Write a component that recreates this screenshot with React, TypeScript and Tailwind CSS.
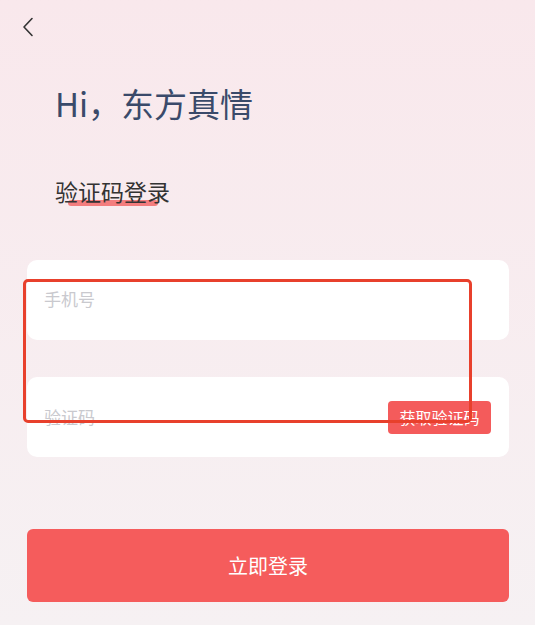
const App = () => {
  return (
    <div className="relative min-h-screen w-full bg-gradient-to-b from-[#f9e8ec] to-[#f6f1f3] font-['Noto_Sans_CJK_SC',sans-serif]">
      <div className="pl-[27px] pr-[26px] pt-[17px]">
        <div className="-ml-[6px] h-5 w-5 flex items-center">
          <svg width="14" height="20" viewBox="0 0 14 20" fill="none">
            <path d="M11 1.5 L3 10 L11 18.5" stroke="#333" strokeWidth="1.6" strokeLinecap="round" strokeLinejoin="round" />
          </svg>
        </div>
        <h1 className="mt-[46px] pl-[28px] text-[33px] leading-[40px] text-[#3a4a6a]">
          Hi，东方真情
        </h1>
        <div className="mt-[55px] pl-[28px]">
          <div className="relative inline-block">
            <span className="absolute left-[13px] top-[22px] h-[6px] w-[90px] rounded-full bg-[#f26a6a]/85"></span>
            <span className="relative text-[23px] leading-[26px] text-[#333]">验证码登录</span>
          </div>
        </div>

        <div className="mt-[54px] flex h-20 items-start rounded-[10px] bg-white px-[17px] pt-[28px]">
          <span className="text-[17px] leading-[22px] text-[#c9c9ce]">手机号</span>
        </div>

        <div className="mt-[37px] flex h-20 items-center justify-between rounded-[10px] bg-white pl-[17px] pr-[18px]">
          <span className="text-[17px] leading-[22px] text-[#c9c9ce]">验证码</span>
          <button className="flex h-[33px] w-[103px] items-center justify-center rounded-[4px] bg-[#f45b5b] text-[16px] text-white">
            获取验证码
          </button>
        </div>

        <button className="mt-[72px] flex h-[73px] w-full items-center justify-center rounded-[6px] bg-[#f55c5c] text-[20px] text-white">
          立即登录
        </button>
      </div>

      <div className="absolute left-[23px] top-[279px] h-[144px] w-[449px] rounded-[5px] border-[3px] border-[#e8402c]"></div>
    </div>
  );
};

export default App;
